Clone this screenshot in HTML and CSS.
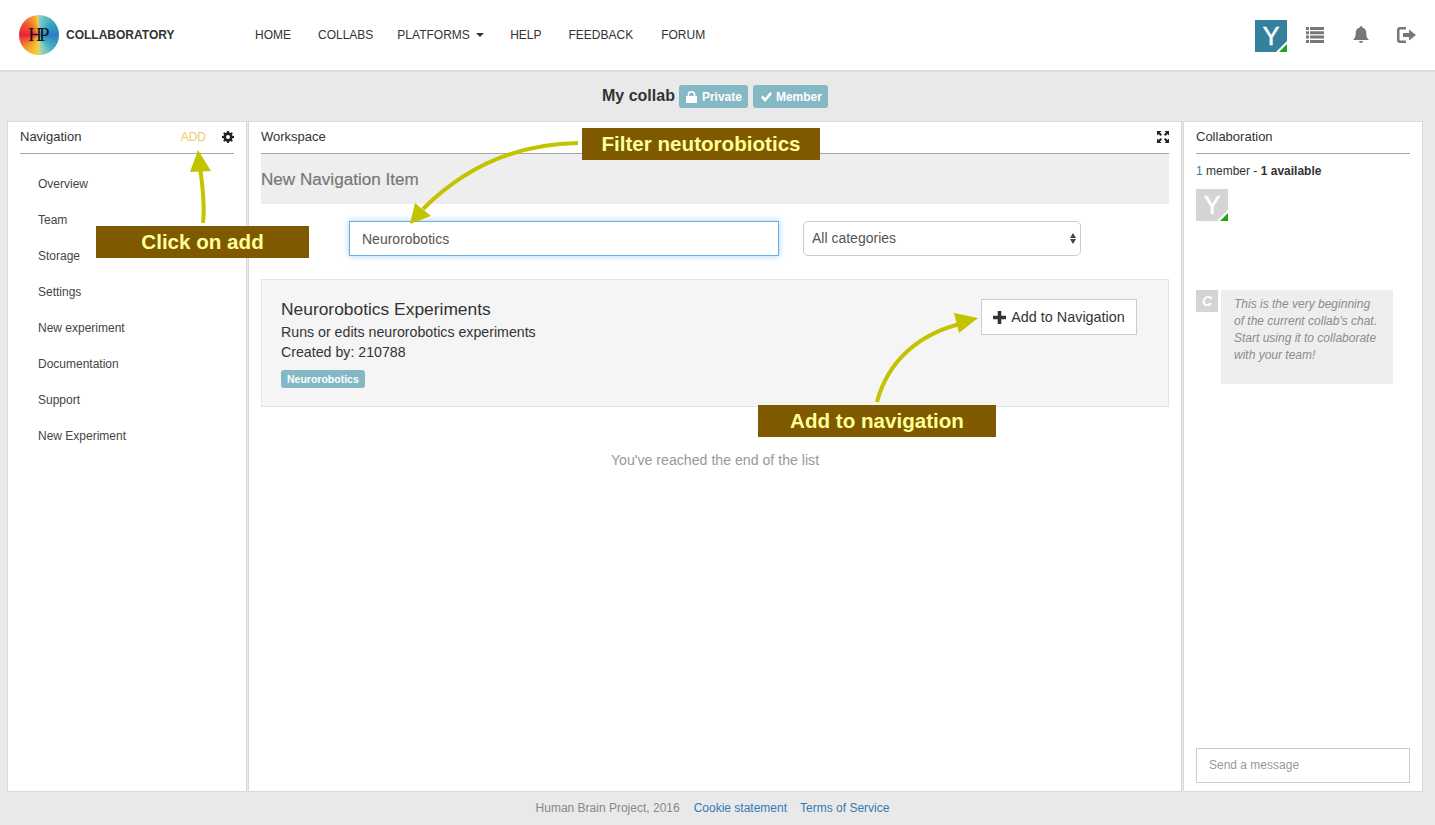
FILE: index.html
```html
<!DOCTYPE html>
<html>
	<head>
		<meta charset="utf-8">
		<title>Collaboratory - My collab</title>
		<link rel="stylesheet" href="styles.css">
	</head>
	<body>
		<header class="topbar">
			<div class="brand">
				<div class="logo"><span class="logo-text">HP</span></div>
				<span class="brand-name">COLLABORATORY</span>
			</div>
			<nav class="mainnav">
				<a class="nav-home">HOME</a>
				<a class="nav-collabs">COLLABS</a>
				<a class="nav-platforms">PLATFORMS <i class="caret"></i></a>
				<a class="nav-help">HELP</a>
				<a class="nav-feedback">FEEDBACK</a>
				<a class="nav-forum">FORUM</a>
			</nav>
			<div class="usertools">
				<div class="avatar avatar-top">Y</div>
				<svg class="tool tool-list" width="18" height="16" viewBox="0 0 18 16"><path d="M0 0h3v3H0zM4 0h14v3H4zM0 4.300h3v3H0zM4 4.300h14v3H4zM0 8.600h3v3H0zM4 8.600h14v3H4zM0 12.900h3v3H0zM4 12.900h14v3H4z"/></svg>
				<svg class="tool tool-bell" width="16" height="18" viewBox="0 0 16 18"><path d="M8 0a1.300 1.300 0 0 1 1.200 1.500C12 2 13.300 4.200 13.300 7c0 4 1 5.500 2.700 7H0c1.700-1.500 2.700-3 2.700-7 0-2.800 1.300-5 4.100-5.500A1.300 1.300 0 0 1 8 0zM6 15h4a2 2 0 0 1-4 0z"/></svg>
				<svg class="tool tool-out" width="19" height="16" viewBox="0 0 19 16"><path d="M3 0h6v2.400H3.500c-.6 0-1 .4-1 1v9.200c0 .6.400 1 1 1H9V16H3a3 3 0 0 1-3-3V3a3 3 0 0 1 3-3z"/><path d="M12 2.500 19 8l-7 5.500V10H6V6h6z"/></svg>
			</div>
		</header>

		<div class="titlerow">
			<span class="collab-title">My collab</span>
			<span class="label label-big label-private">
				<svg width="11" height="12" viewBox="0 0 10 12" preserveAspectRatio="none"><path d="M0 5h1.500V3.500a3.500 3.500 0 0 1 7 0V5H10v7H0zM3 5h4V3.500a2 2 0 0 0-4 0z"/></svg>
				Private
			</span>
			<span class="label label-big label-member">
				<svg width="11" height="10" viewBox="0 0 12 10" preserveAspectRatio="none"><path d="M0 5.500 2 3.500 4.500 6 10 0l2 2-7.500 8z"/></svg>
				Member
			</span>
		</div>

		<main class="panels">
			<section class="panel panel-side">
				<div class="panel-head">
					<span class="panel-title">Navigation</span>
					<span class="add-link">ADD</span>
					<svg class="gear" width="12" height="12" viewBox="0 0 12 12"><path fill-rule="evenodd" d="M5 0h2l.3 1.600 1.100.5L9.800 1.200l1 1-.9 1.400.5 1.100L12 5v2l-1.600.3-.5 1.100.9 1.400-1 1-1.400-.9-1.100.5L7 12H5l-.3-1.600-1.100-.5-1.400.9-1-1 .9-1.400-.5-1.100L0 7V5l1.600-.3.500-1.100-.9-1.400 1-1 1.400.9 1.100-.5zM6 4a2 2 0 1 0 0 4 2 2 0 0 0 0-4z"/></svg>
				</div>
				<ul class="sidenav">
					<li>Overview</li>
					<li>Team</li>
					<li>Storage</li>
					<li>Settings</li>
					<li>New experiment</li>
					<li>Documentation</li>
					<li>Support</li>
					<li>New Experiment</li>
				</ul>
			</section>

			<section class="panel panel-work">
				<div class="panel-head">
					<span class="panel-title">Workspace</span>
					<svg class="expand" width="12" height="12" viewBox="0 0 12 12"><path d="M0 0h4.500L3 1.500l2 2L3.500 5l-2-2L0 4.500zM12 0v4.500L10.500 3l-2 2L7 3.500l2-2L7.500 0zM0 12V7.500L1.500 9l2-2L5 8.500l-2 2L4.500 12zM12 12H7.500L9 10.500l-2-2L8.500 7l2 2L12 7.500z"/></svg>
				</div>
				<h2 class="new-item">New Navigation Item</h2>
				<div class="filters">
					<input class="search" type="text" value="Neurorobotics">
					<div class="select-box">
						<span class="select-text">All categories</span>
						<span class="updown"><i class="up"></i><i class="down"></i></span>
					</div>
				</div>
				<div class="result">
					<div class="result-text">
						<h3>Neurorobotics Experiments</h3>
						<p>Runs or edits neurorobotics experiments</p>
						<p>Created by: 210788</p>
						<span class="label label-small">Neurorobotics</span>
					</div>
					<button class="add-btn">
						<svg width="13" height="13" viewBox="0 0 13 13"><path d="M4.700 0h3.600v4.700H13v3.600H8.300V13H4.700V8.300H0V4.700h4.700z"/></svg>
						Add to Navigation
					</button>
				</div>
				<p class="list-end">You've reached the end of the list</p>
			</section>

			<section class="panel panel-side panel-chat">
				<div class="panel-head">
					<span class="panel-title">Collaboration</span>
				</div>
				<p class="members"><span class="count">1</span> member - <b>1 available</b></p>
				<div class="avatar avatar-grey">Y</div>
				<div class="chat">
					<div class="chat-c">C</div>
					<div class="chat-msg">This is the very beginning of the current collab's chat. Start using it to collaborate with your team!</div>
				</div>
				<input class="message" type="text" placeholder="Send a message">
			</section>
		</main>

		<footer class="footer">
			<span>Human Brain Project, 2016</span>
			<a>Cookie statement</a>
			<a>Terms of Service</a>
		</footer>

		<!-- annotations over the screenshot -->
		<svg class="arrows" width="1435" height="825" viewBox="0 0 1435 825">
			<g fill="none" stroke="#c3c300" stroke-width="4">
				<path d="M203 223C205 205 203 188 200 168"/>
				<path d="M578 143C510 144 460 172 423 209"/>
				<path d="M877 402C888 360 920 334 960 324"/>
			</g>
			<g fill="#c3c300">
				<path d="M198 150 211 171 190 172z"/>
				<path d="M410 224 415 203 431 216z"/>
				<path d="M978 318 954 313 959 333z"/>
			</g>
		</svg>
		<div class="note note-add">Click on add</div>
		<div class="note note-filter">Filter neutorobiotics</div>
		<div class="note note-nav">Add to navigation</div>
	</body>
</html>
```

FILE: styles.css
```css
*{
	margin:0;
	padding:0;
	box-sizing:border-box;
}
body{
	width:1435px;
	height:825px;
	overflow:hidden;
	position:relative;
	background:#e9e9e9;
	font-family:"Liberation Sans",Arial,sans-serif;
	font-size:12px;
	color:#333;
}
/* top bar */
.topbar{
	height:72px;
	background:#fff;
	border-bottom:2px solid #dcdcdc;
	display:flex;
	align-items:center;
	padding:0 19px;
}
.brand{
	width:236px;
	display:flex;
	align-items:center;
	gap:7px;
}
.logo{
	width:40px;
	height:40px;
	border-radius:50%;
	background:conic-gradient(#8fcfc0 0deg,#38a8c0 45deg,#2c7fbf 90deg,#45aec4 135deg,#a8d8b0 176deg,#f4d23c 184deg,#f59a2a 225deg,#e8203c 270deg,#ef5a30 310deg,#f7a52c 345deg,#f4d23c 355deg,#8fcfc0 360deg);
	display:flex;
	align-items:center;
	justify-content:center;
}
.logo-text{
	font-family:"Liberation Serif",serif;
	font-size:19px;
	color:#111;
	letter-spacing:-3px;
	margin-left:-3px;
}
.brand-name{
	font-size:12px;
	font-weight:bold;
	color:#333;
}
.mainnav{
	display:flex;
	font-size:12px;
	color:#333;
}
.nav-collabs{margin-left:27px;}
.nav-platforms{margin-left:24px;}
.nav-help{margin-left:26px;}
.nav-feedback{margin-left:27px;}
.nav-forum{margin-left:28px;}
.caret{
	display:inline-block;
	width:0;
	height:0;
	margin-left:3px;
	vertical-align:2px;
	border-top:4px solid #333;
	border-left:4px solid transparent;
	border-right:4px solid transparent;
}
.usertools{
	margin-left:auto;
	display:flex;
	align-items:center;
}
.tool{
	fill:#777;
}
.tool-list{margin-left:19px;}
.tool-bell{margin-left:29px;}
.tool-out{margin-left:28px;}
.avatar{
	width:32px;
	height:32px;
	position:relative;
	color:#fff;
	font-size:25px;
	line-height:33px;
	text-align:center;
	-webkit-text-stroke:.5px #fff;
}
.avatar::before{
	content:"";
	position:absolute;
	right:0;
	bottom:0;
	border-bottom:11px solid #fff;
	border-left:11px solid transparent;
}
.avatar::after{
	content:"";
	position:absolute;
	right:0;
	bottom:0;
	border-bottom:8px solid #1aa81a;
	border-left:8px solid transparent;
}
.avatar-top{
	background:#34809f;
	margin-top:2px;
}
.avatar-grey{
	background:#d4d4d4;
	margin-top:11px;
}
/* title */
.titlerow{
	height:49px;
	display:flex;
	align-items:center;
	justify-content:center;
	gap:5px;
	padding-right:5px;
}
.collab-title{
	font-size:16px;
	font-weight:bold;
	color:#333;
	margin-right:-1px;
	margin-bottom:2px;
}
.label{
	background:#83b8c4;
	color:#fff;
	font-weight:bold;
	border-radius:3px;
}
.label-big{
	height:23px;
	font-size:12px;
	display:flex;
	align-items:center;
	gap:4px;
}
.label-big svg{
	fill:#fff;
}
.label-private{
	padding:0 6px 0 7px;
	gap:5px;
}
.label-member{
	padding:0 6px 0 8px;
}
.label-small{
	display:inline-block;
	height:18px;
	line-height:18px;
	padding:0 6px;
	font-size:10.500px;
	margin-top:8px;
}
/* panels */
.panels{
	height:671px;
	display:flex;
	padding:0 12px 0 7px;
	gap:1px;
}
.panel{
	background:#fff;
	border:1px solid #d9d9d9;
	padding:0 12px;
	position:relative;
}
.panel-side{
	width:240px;
}
.panel-work{
	width:934px;
}
.panel-head{
	height:32px;
	border-bottom:1px solid #a6a6a6;
	display:flex;
	align-items:center;
	padding-bottom:2px;
	font-size:13px;
	color:#333;
}
.add-link{
	margin-left:auto;
	color:#eecb6b;
	font-size:12px;
}
.gear{
	margin-left:16px;
	fill:#222;
}
.expand{
	margin-left:auto;
	fill:#222;
}
.sidenav{
	list-style:none;
	padding:12px 0 0 18px;
}
.sidenav li{
	height:36px;
	line-height:36px;
	color:#444;
}
.new-item{
	height:50px;
	line-height:51px;
	background:#eee;
	font-size:17.100px;
	font-weight:normal;
	color:#777;
	-webkit-text-stroke:.2px #777;
}
.filters{
	display:flex;
	margin:17px 0 0 88px;
	gap:24px;
}
.search{
	width:430px;
	height:35px;
	border:1px solid #66afe9;
	box-shadow:0 0 6px rgba(102,175,233,.6);
	padding:0 12px;
	font-family:"Liberation Sans",Arial,sans-serif;
	font-size:14px;
	color:#555;
	outline:none;
}
.select-box{
	width:278px;
	height:35px;
	border:1px solid #ccc;
	border-radius:5px;
	display:flex;
	align-items:center;
	justify-content:space-between;
	padding:0 4px 0 8px;
	font-size:14px;
	color:#555;
}
.select-text{
	margin-bottom:2px;
}
.updown{
	display:flex;
	flex-direction:column;
	gap:1px;
}
.updown i{
	display:block;
	width:0;
	height:0;
	border-left:3.500px solid transparent;
	border-right:3.500px solid transparent;
}
.updown .up{border-bottom:5px solid #444;}
.updown .down{border-top:5px solid #444;}
.result{
	height:128px;
	margin-top:23px;
	background:#f5f5f5;
	border:1px solid #e3e3e3;
	display:flex;
	justify-content:space-between;
	padding:19px 31px 0 19px;
}
.result-text h3{
	font-size:17.400px;
	font-weight:normal;
	line-height:20px;
	color:#333;
}
.result-text p{
	font-size:14.200px;
	line-height:20px;
	color:#333;
}
.result-text h3 + p{
	margin-top:3px;
}
.add-btn{
	width:156px;
	height:36px;
	background:#fff;
	border:1px solid #ccc;
	font-family:"Liberation Sans",Arial,sans-serif;
	font-size:14.400px;
	color:#333;
	display:flex;
	align-items:center;
	justify-content:center;
	gap:5px;
}
.add-btn svg{
	fill:#333;
}
.list-end{
	text-align:center;
	margin-top:44px;
	font-size:14.150px;
	line-height:18px;
	color:#999;
}
/* chat */
.panel-chat{
	display:flex;
	flex-direction:column;
}
.members{
	margin-top:10px;
	line-height:14px;
}
.count{
	color:#34809f;
}
.chat{
	display:flex;
	margin-top:69px;
	gap:3px;
}
.chat-c{
	width:22px;
	height:22px;
	background:#d4d4d4;
	color:#fff;
	font-size:14px;
	font-weight:bold;
	font-style:italic;
	text-align:center;
	line-height:22px;
}
.chat-msg{
	width:172px;
	height:94px;
	background:#eee;
	padding:6px 12px 6px 13px;
	font-style:italic;
	line-height:17px;
	color:#8c8c8c;
}
.message{
	margin-top:auto;
	margin-bottom:8px;
	height:35px;
	border:1px solid #ccc;
	padding:0 12px 2px;
	font-family:"Liberation Sans",Arial,sans-serif;
	font-size:12px;
}
.message::placeholder{
	color:#999;
}
/* footer */
.footer{
	display:flex;
	justify-content:center;
	gap:13px;
	padding:9px 10px 0 0;
	font-size:12px;
	color:#888;
}
.footer span{
	margin-right:1px;
}
.footer a{
	color:#337ab7;
}
/* annotations */
.arrows{
	position:absolute;
	left:0;
	top:0;
}
.note{
	position:absolute;
	height:32px;
	background:#7f5900;
	color:#ffff99;
	font-size:20.600px;
	font-weight:bold;
	line-height:32px;
	text-align:center;
}
.note-add{
	left:96px;
	top:226px;
	width:213px;
}
.note-filter{
	left:582px;
	top:128px;
	width:238px;
}
.note-nav{
	left:758px;
	top:405px;
	width:238px;
}
```
